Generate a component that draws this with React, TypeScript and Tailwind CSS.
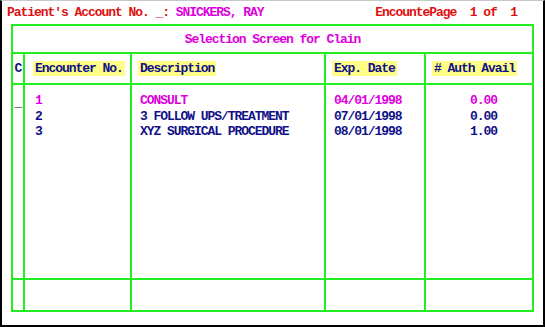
import React from 'react';

const GREEN = 'border-[#22ee22]';

interface Row {
  no: string;
  desc: string;
  date: string;
  auth: string;
  active?: boolean;
}

const rows: Row[] = [
  { no: '1', desc: 'CONSULT', date: '04/01/1998', auth: '0.00', active: true },
  { no: '2', desc: '3 FOLLOW UPS/TREATMENT', date: '07/01/1998', auth: '0.00' },
  { no: '3', desc: 'XYZ SURGICAL PROCEDURE', date: '08/01/1998', auth: '1.00' },
];

const Hl: React.FC<{ children: React.ReactNode }> = ({ children }) => (
  <span className="bg-[#ffff88] px-[2px] py-[1px] text-[#101088]">{children}</span>
);

export default function App() {
  const rowColor = (r: Row) => (r.active ? 'text-[#dd00dd]' : 'text-[#101088]');

  return (
    <div
      className="w-[545px] h-[327px] bg-white border-l-2 border-r-2 border-b-2 border-black border-t border-t-[#c8c8c8] flex flex-col overflow-hidden"
      style={{ fontFamily: '"Liberation Mono", "DejaVu Sans Mono", monospace' }}
    >
      <div className="h-[23px] flex items-center pl-[5px] pr-[26px] text-[13px] font-bold tracking-[-1.05px] whitespace-pre leading-none">
        <span className="text-[#dd1111]">Patient's Account No. _: </span>
        <span className="text-[#dd00dd]">SNICKERS, RAY</span>
        <span className="ml-auto text-[#dd1111]">EncountePage  1 of  1</span>
      </div>

      <div className={`ml-[9px] w-[523px] h-[288px] border-2 ${GREEN} flex flex-col text-[13px] font-bold tracking-[-1.05px] leading-none`}>
        <div className={`h-[28px] border-b-2 ${GREEN} flex items-center justify-center text-[#dd00dd] whitespace-pre`}>
          Selection Screen for Clain
        </div>

        <div className="flex-1 grid grid-cols-[12px_107px_194px_100px_1fr] grid-rows-[31px_1fr_30px]">
          {/* header */}
          <div className={`border-r-2 border-b-2 ${GREEN} flex items-center justify-center text-[#101088]`}>C</div>
          <div className={`border-r-2 border-b-2 ${GREEN} flex items-center pl-[8px] whitespace-pre`}><Hl>Encounter No.</Hl></div>
          <div className={`border-r-2 border-b-2 ${GREEN} flex items-center pl-[6px]`}><Hl>Description</Hl></div>
          <div className={`border-r-2 border-b-2 ${GREEN} flex items-center pl-[6px] whitespace-pre`}><Hl>Exp. Date</Hl></div>
          <div className={`border-b-2 ${GREEN} flex items-center pl-[6px] whitespace-pre`}><Hl>&#35; Auth Avail</Hl></div>

          {/* body */}
          <div className={`border-r-2 border-b-2 ${GREEN} pt-[9px] flex flex-col items-center`}>
            <div className="h-[15.5px] text-black pt-[2px]">_</div>
          </div>
          <div className={`border-r-2 border-b-2 ${GREEN} pt-[9px] pl-[10px]`}>
            {rows.map(r => (
              <div key={r.no} className={`h-[15.5px] ${rowColor(r)}`}>{r.no}</div>
            ))}
          </div>
          <div className={`border-r-2 border-b-2 ${GREEN} pt-[9px] pl-[8px]`}>
            {rows.map(r => (
              <div key={r.no} className={`h-[15.5px] whitespace-pre ${rowColor(r)}`}>{r.desc}</div>
            ))}
          </div>
          <div className={`border-r-2 border-b-2 ${GREEN} pt-[9px] pl-[8px]`}>
            {rows.map(r => (
              <div key={r.no} className={`h-[15.5px] ${rowColor(r)}`}>{r.date}</div>
            ))}
          </div>
          <div className={`border-b-2 ${GREEN} pt-[9px] pr-[35px] text-right`}>
            {rows.map(r => (
              <div key={r.no} className={`h-[15.5px] ${rowColor(r)}`}>{r.auth}</div>
            ))}
          </div>

          {/* empty footer row */}
          <div className={`border-r-2 ${GREEN}`} />
          <div className={`border-r-2 ${GREEN}`} />
          <div className={`border-r-2 ${GREEN}`} />
          <div className={`border-r-2 ${GREEN}`} />
          <div />
        </div>
      </div>
    </div>
  );
}
